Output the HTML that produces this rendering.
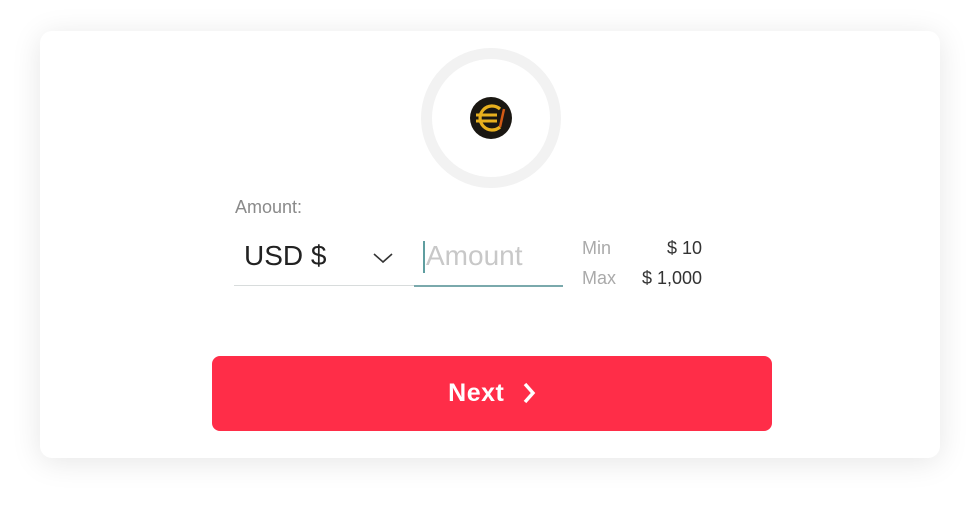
<!DOCTYPE html>
<html><head><meta charset="utf-8"><style>
*{margin:0;padding:0;box-sizing:border-box}
body{width:980px;height:506px;background:#fff;font-family:"Liberation Sans",Arial,sans-serif;position:relative;overflow:hidden}
.card{position:absolute;left:40px;top:31px;width:900px;height:427px;background:#fff;border-radius:12px;box-shadow:0 4px 30px rgba(0,0,0,0.10)}
.ring{position:absolute;left:421px;top:48px;width:140px;height:140px;border-radius:50%;border:11px solid #f2f2f2}
.coin{position:absolute;left:470px;top:97px;width:42px;height:42px}
.lbl{position:absolute;left:235px;top:197px;font-size:18px;color:#8a8a8a}
.usd{position:absolute;left:244px;top:240px;font-size:28px;color:#222}
.chev{position:absolute;left:372px;top:251px}
.line1{position:absolute;left:234px;top:285px;width:180px;height:1px;background:#d8dcdc}
.line2{position:absolute;left:414px;top:285px;width:149px;height:2px;background:#7aa9ac}
.caret{position:absolute;left:423px;top:241px;width:2px;height:32px;background:#5f9ea0}
.ph{position:absolute;left:426px;top:240px;font-size:28px;color:#c8c8c8}
.mm{position:absolute;font-size:18px}
.r{text-align:right;width:100px}
.btn{position:absolute;left:212px;top:356px;width:560px;height:75px;background:#ff2d48;border-radius:8px;color:#fff;font-weight:bold;font-size:25px;text-align:center;line-height:75px;letter-spacing:0.5px}
</style></head><body>
<div class="card"></div>
<div class="ring"></div>
<svg class="coin" viewBox="0 0 42 42">
<circle cx="21" cy="21" r="21" fill="#1a1712"/>
<path d="M30 12a12 12 0 1 0 0 18" fill="none" stroke="#e8b01e" stroke-width="3.2"/>
<rect x="6" y="16.5" width="21" height="3" fill="#e8b01e"/>
<rect x="6" y="22.5" width="21" height="3" fill="#e8b01e"/>
<path d="M34 12l-4 18" stroke="#d25a14" stroke-width="2.5"/>
</svg>
<div class="lbl">Amount:</div>
<div class="usd">USD $</div>
<svg class="chev" width="22" height="14" viewBox="0 0 22 14"><path d="M2 3l9 8 9-8" fill="none" stroke="#333" stroke-width="1.6"/></svg>
<div class="line1"></div><div class="line2"></div>
<div class="caret"></div>
<div class="ph">Amount</div>
<div class="mm" style="left:582px;top:238px;color:#aaa">Min</div>
<div class="mm r" style="left:602px;top:238px;color:#333">$ 10</div>
<div class="mm" style="left:582px;top:268px;color:#aaa">Max</div>
<div class="mm r" style="left:602px;top:268px;color:#333">$ 1,000</div>
<div class="btn">Next <svg width="14" height="22" viewBox="0 0 14 22" style="vertical-align:-3px;margin-left:10px"><path d="M3 2l8 9-8 9" fill="none" stroke="#fff" stroke-width="3.4"/></svg></div>
</body></html>
